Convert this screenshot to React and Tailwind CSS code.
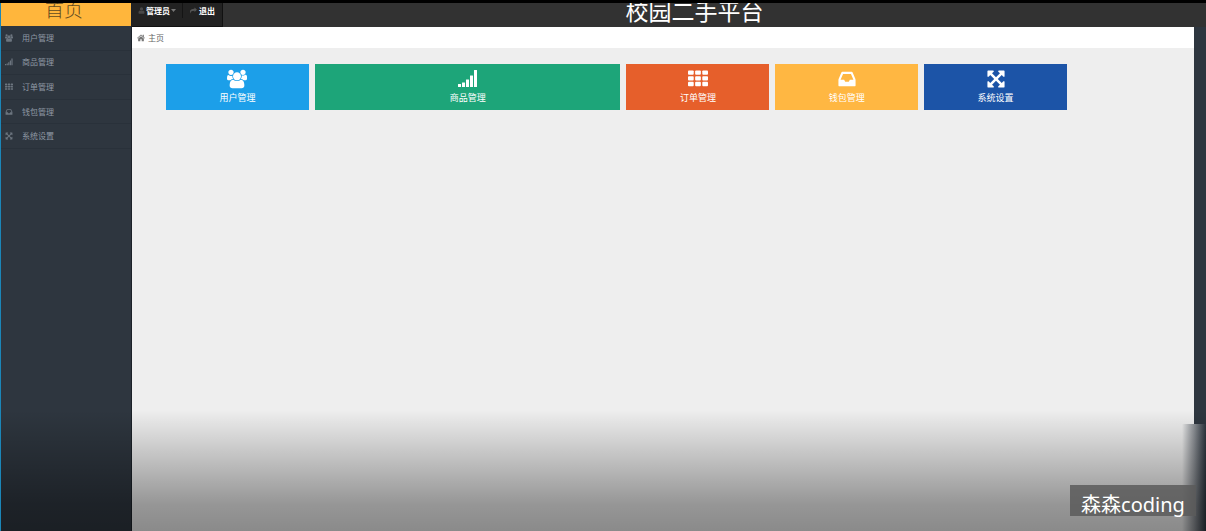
import React from "react";

function UsersIcon({ className }) {
  return (
    <svg className={className} viewBox="0 0 1920 1792" fill="currentColor" aria-hidden="true">
      <path d="M593 896q-162 5-265 128h-134q-82 0-138-40.5t-56-118.5q0-353 124-353 6 0 43.5 21t97.5 42.5 119 21.5q67 0 133-23-5 37-5 66 0 159 93 290zm1071 637q0 120-73 189.5t-194 69.5h-874q-121 0-194-69.5t-73-189.5q0-53 3.5-103.5t14-109 26.5-108.5 43-97.5 62-81 85.5-53.5 111.5-20q10 0 43 21.5t73 48 107 48 135 21.5 135-21.5 107-48 73-48 43-21.5q61 0 111.5 20t85.5 53.5 62 81 43 97.5 26.5 108.5 14 109 3.5 103.5zm-1024-1277q0 106-75 181t-181 75-181-75-75-181 75-181 181-75 181 75 75 181zm704 384q0 159-112.5 271.5t-271.5 112.5-271.5-112.5-112.5-271.5 112.5-271.5 271.5-112.5 271.5 112.5 112.5 271.5zm576 225q0 78-56 118.5t-138 40.5h-134q-103-123-265-128 93-131 93-290 0-29-5-66 66 23 133 23 59 0 119-21.5t97.5-42.5 43.5-21q124 0 124 353zm-128-609q0 106-75 181t-181 75-181-75-75-181 75-181 181-75 181 75 75 181z" />
    </svg>
  );
}

function SignalIcon({ className }) {
  return (
    <svg className={className} viewBox="0 0 20 20" fill="currentColor" aria-hidden="true">
      <rect x="0" y="15" width="3" height="3" rx="0.3" />
      <rect x="4" y="13.500" width="3" height="4.500" rx="0.3" />
      <rect x="8" y="10.500" width="3" height="7.500" rx="0.3" />
      <rect x="12" y="6.500" width="3" height="11.500" rx="0.3" />
      <rect x="16" y="1" width="3" height="17" rx="0.3" />
    </svg>
  );
}

function GridIcon({ className }) {
  return (
    <svg className={className} viewBox="0 0 1792 1792" fill="currentColor" aria-hidden="true">
      {[128, 640, 1152].map((y) =>
        [0, 640, 1280].map((x) => (
          <rect key={`${x}-${y}`} x={x} y={y} width="512" height="384" rx="80" />
        ))
      )}
    </svg>
  );
}

function InboxIcon({ className }) {
  return (
    <svg className={className} viewBox="0 0 1792 1792" fill="currentColor" aria-hidden="true">
      <path d="M1151 960h316q-1-3-2.5-8t-2.5-8l-212-496h-708l-212 496q-1 2-2.5 8t-2.5 8h316l95 192h320zm513 30v482q0 26-19 45t-45 19h-1408q-26 0-45-19t-19-45v-482q0-62 25-123l238-552q10-25 36.5-42t52.5-17h832q26 0 52.5 17t36.5 42l238 552q25 61 25 123z" />
    </svg>
  );
}

function ArrowsIcon({ className }) {
  return (
    <svg className={className} viewBox="0 0 1792 1792" fill="currentColor" aria-hidden="true">
      <path d="M1411 541l-355 355 355 355 144-144q29-31 70-14 39 17 39 59v448q0 26-19 45t-45 19h-448q-42 0-59-40-17-39 14-69l144-144-355-355-355 355 144 144q31 30 14 69-17 40-59 40h-448q-26 0-45-19t-19-45v-448q0-42 40-59 39-17 69 14l144 144 355-355-355-355-144 144q-19 19-45 19-12 0-24-5-40-17-40-59v-448q0-26 19-45t45-19h448q42 0 59 40 17 39-14 69l-144 144 355 355 355-355-144-144q-31-30-14-69 17-40 59-40h448q26 0 45 19t19 45v448q0 42-39 59-13 5-25 5-26 0-45-19z" />
    </svg>
  );
}

function UserIcon({ className }) {
  return (
    <svg className={className} viewBox="0 0 14 14" fill="currentColor" aria-hidden="true">
      <circle cx="7" cy="4" r="3.4" />
      <path d="M1 11.5C1 8.5 2.2 6.8 4 6.8c1.8 1.5 4.2 1.5 6 0 1.800 0 3 1.700 3 4.700 0 1.200-.8 2-2 2H3c-1.200 0-2-.8-2-2z" />
    </svg>
  );
}

function ShareIcon({ className }) {
  return (
    <svg className={className} viewBox="0 0 14 14" fill="currentColor" aria-hidden="true">
      <path d="M14 5.500 9 1v2.700C3.500 3.700 0 5.500 0 9.500c0 1.300.5 2.600 1.300 3.500C1 8.800 3.500 7.500 9 7.500V10z" />
    </svg>
  );
}

function HomeIcon({ className }) {
  return (
    <svg className={className} viewBox="0 0 14 14" fill="currentColor" aria-hidden="true">
      <path d="M7 1 0 7l.8.9L7 2.700l6.200 5.200.8-.9-2-1.700V1.500h-2v2z" />
      <path d="M7 4 2 8v4.500h3.800V9h2.400v3.500H12V8z" />
    </svg>
  );
}

const items = [
  { label: "用户管理", Icon: UsersIcon, color: "bg-[#1c9fe9]" },
  { label: "商品管理", Icon: SignalIcon, color: "bg-[#1da579]" },
  { label: "订单管理", Icon: GridIcon, color: "bg-[#e65f2b]" },
  { label: "钱包管理", Icon: InboxIcon, color: "bg-[#ffb742]" },
  { label: "系统设置", Icon: ArrowsIcon, color: "bg-[#1c54a7]" },
];

export default function App() {
  return (
    <div className="relative flex min-h-screen flex-col overflow-hidden border-t-[3px] border-black bg-[#2e363f] font-['Noto_Sans','Noto_Sans_CJK_SC',sans-serif]">
      <div className="flex flex-1 border-l border-[#1b86b8]">
        <aside className="w-[130px] shrink-0">
          <a
            href="#home"
            className="flex h-[23px] items-center justify-center overflow-hidden bg-[#ffb63c] pb-[9px] pr-1 text-[19px] font-light leading-none text-[#5f4a22]"
          >
            首页
          </a>
          <nav>
            <ul className="flex h-[123px] flex-col">
              {items.map(({ label, Icon }) => (
                <li key={label} className="flex-1 border-b border-[#29313a]">
                  <a href="#menu" className="flex h-full items-center gap-[9px] pl-1 text-[8px] leading-none text-[#8f99a4]">
                    <Icon className="size-2 text-[#6c757f]" />
                    {label}
                  </a>
                </li>
              ))}
            </ul>
          </nav>
        </aside>

        <div className="flex min-w-0 flex-1 flex-col border-l border-[#1b2128]">
          <header className="flex h-6 overflow-hidden bg-[#323232]">
            <div className="flex shrink-0 border-b border-r border-[#111111] bg-[#222222] pb-2 text-[8px] font-bold leading-none text-white">
              <button type="button" className="flex w-[51px] items-center justify-center gap-px border-r border-[#141414]">
                <UserIcon className="size-[7px] text-[#484848]" />
                管理员
                <svg className="w-[5px]" viewBox="0 0 5 3" fill="#777777" aria-hidden="true">
                  <path d="M0 0h5L2.500 3z" />
                </svg>
              </button>
              <button type="button" className="flex w-[39px] items-center justify-center gap-0.5">
                <ShareIcon className="size-[7px] text-[#555555]" />
                退出
              </button>
            </div>
            <h1 className="flex flex-1 items-center justify-center whitespace-nowrap pb-2 pr-10 text-[23px] font-normal leading-none text-white">
              校园二手平台
            </h1>
          </header>

          <main className="mr-3 flex-1 bg-[#eeeeee]">
            <nav className="flex h-[21px] items-center gap-[3px] bg-white pl-[5px] text-[8px] leading-none text-[#666666]">
              <HomeIcon className="size-2 text-[#777777]" />
              <a href="#home">主页</a>
            </nav>
            <div className="grid grid-cols-[143fr_306fr_143fr_143fr_143fr] gap-1.5 pl-[34px] pr-[127px] pt-4">
              {items.map(({ label, Icon, color }) => (
                <a
                  key={label}
                  href="#section"
                  className={`flex h-[46px] flex-col items-center gap-1 pt-[5px] text-[9px] leading-none text-white ${color}`}
                >
                  <Icon className="size-5" />
                  {label}
                </a>
              ))}
            </div>
          </main>
        </div>
      </div>

      <div className="pointer-events-none absolute bottom-0 right-0 h-[107px] w-6 bg-linear-to-r from-[#eeeeee] via-[#8e9297] via-50% to-[#2e363f]" />
      <div className="pointer-events-none absolute bottom-0 left-px right-0 h-[121px] bg-linear-to-b from-black/0 via-black/37 via-78% to-black/42" />
      <div className="absolute bottom-[15px] right-2.5 flex h-[31px] w-[126px] items-center justify-center whitespace-nowrap bg-[#5a5a5a]/85 pt-2 text-[20px] leading-none text-white">
        森森coding
      </div>
    </div>
  );
}
